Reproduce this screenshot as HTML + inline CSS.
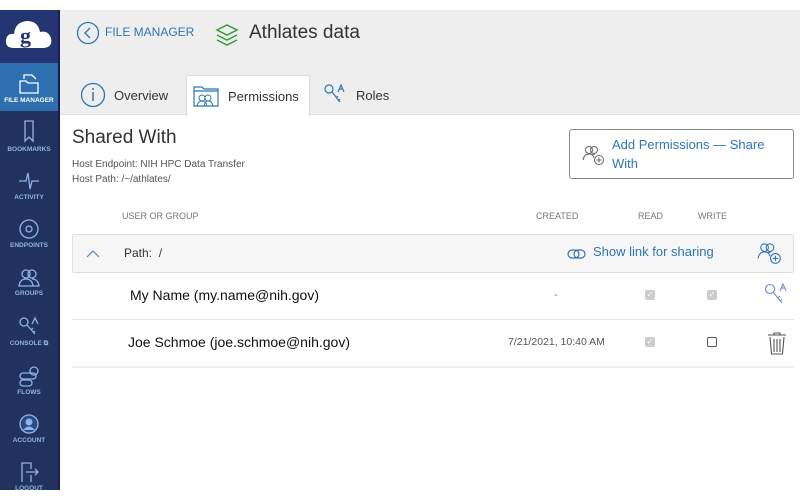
<!DOCTYPE html>
<html><head><meta charset="utf-8"><style>
*{box-sizing:border-box;margin:0;padding:0}
body{width:800px;height:500px;background:#fff;font-family:"Liberation Sans",sans-serif;position:relative;overflow:hidden}
#sb{position:absolute;left:0;top:10px;width:60px;height:480px;background:#22325e;border-right:2px solid #1a1f5a}
#logo{position:absolute;left:0;top:0;width:58px;height:53px;background:#243573}
.it{position:absolute;left:0;width:58px;text-align:center;color:#8fb3e6;font-size:6.5px;font-weight:bold}
.it svg{display:block;margin:0 auto 2px}
#act{background:#2e6fb0;color:#fff}
#hdr{position:absolute;left:60px;top:10px;width:740px;height:105px;background:#eeeeee;border-bottom:1px solid #e2e2e2}
.blue{color:#2f75b5}
.tab{position:absolute;top:65px;height:40px;font-size:13px;color:#333;display:flex;align-items:center}
.m{position:absolute;color:#555}
.hd{position:absolute;top:211px;font-size:9px;color:#777}
.cb{position:absolute;width:10px;height:10px;border-radius:2px;color:#fff;font-size:8px;line-height:10px;text-align:center}
</style></head><body>
<div id="sb">
 <div id="logo"><svg width="58" height="53" viewBox="0 0 58 53"><path d="M14 38 Q5 38 6 30 Q7 23 14 24 Q15 12 27 11 Q38 11 40 22 Q48 20 51 28 Q53 37 44 38 Z" fill="#fff"/><text x="20" y="33" font-size="22" font-family="Liberation Serif" font-weight="bold" fill="#243573">g</text></svg></div>
 <div class="it" id="act" style="top:53px;height:48px;padding-top:10px"><svg width="22" height="22" viewBox="0 0 22 22"><path d="M2 8h6l2 2h10v10H2z M6 6V2h8l4 4" fill="none" stroke="#fff" stroke-width="1.3"/></svg>FILE MANAGER</div>
 <div class="it" style="top:110px"><svg width="14" height="24" viewBox="0 0 14 24"><path d="M3 1h8v20l-4-4-4 4z" fill="none" stroke="#8fb3e6" stroke-width="1.3"/></svg>BOOKMARKS</div>
 <div class="it" style="top:160px"><svg width="22" height="22" viewBox="0 0 22 22"><path d="M1 11h7l2-8 2 16 2-8h7" fill="none" stroke="#8fb3e6" stroke-width="1.3"/></svg>ACTIVITY</div>
 <div class="it" style="top:208px"><svg width="22" height="22" viewBox="0 0 22 22"><circle cx="11" cy="11" r="9" fill="none" stroke="#8fb3e6" stroke-width="1.3"/><circle cx="11" cy="11" r="3" fill="none" stroke="#8fb3e6" stroke-width="1.3"/></svg>ENDPOINTS</div>
 <div class="it" style="top:258px"><svg width="22" height="20" viewBox="0 0 22 20"><circle cx="8" cy="6" r="4" fill="none" stroke="#8fb3e6" stroke-width="1.3"/><circle cx="14" cy="6" r="4" fill="none" stroke="#8fb3e6" stroke-width="1.3"/><path d="M1 18q1-7 7-7t7 7zM10 18h11q-1-7-7-7" fill="none" stroke="#8fb3e6" stroke-width="1.3"/></svg>GROUPS</div>
 <div class="it" style="top:306px"><svg width="22" height="22" viewBox="0 0 22 22"><circle cx="6" cy="6" r="4" fill="none" stroke="#8fb3e6" stroke-width="1.3"/><path d="M9 9l8 9M13 14l2-2M15 17l2-2M14 8l3-6 3 6" fill="none" stroke="#8fb3e6" stroke-width="1.3"/></svg>CONSOLE ⧉</div>
 <div class="it" style="top:355px"><svg width="22" height="22" viewBox="0 0 22 22"><circle cx="16" cy="6" r="4" fill="none" stroke="#8fb3e6" stroke-width="1.3"/><rect x="2" y="8" width="16" height="6" rx="3" fill="none" stroke="#8fb3e6" stroke-width="1.3"/><rect x="2" y="15" width="12" height="6" rx="3" fill="none" stroke="#8fb3e6" stroke-width="1.3"/></svg>FLOWS</div>
 <div class="it" style="top:403px"><svg width="22" height="22" viewBox="0 0 22 22"><circle cx="11" cy="11" r="9" fill="#2a4a84" stroke="#8fb3e6" stroke-width="1.3"/><circle cx="11" cy="9" r="3.5" fill="#8fb3e6"/><path d="M5 17q6-7 12 0" fill="#8fb3e6"/></svg>ACCOUNT</div>
 <div class="it" style="top:451px"><svg width="22" height="22" viewBox="0 0 22 22"><path d="M4 21V2h9v6M13 14v7M8 11h12M17 8l3 3-3 3" fill="none" stroke="#8fb3e6" stroke-width="1.3"/></svg>LOGOUT</div>
</div>
<div id="hdr">
 <svg style="position:absolute;left:16px;top:11px" width="24" height="24" viewBox="0 0 24 24"><circle cx="12" cy="12" r="10.5" fill="none" stroke="#2f75b5" stroke-width="1.3"/><path d="M14 7l-5 5 5 5" fill="none" stroke="#2f75b5" stroke-width="1.3"/></svg>
 <div class="blue" style="position:absolute;left:45px;top:15px;font-size:12px">FILE MANAGER</div>
 <svg style="position:absolute;left:155px;top:14px" width="24" height="26" viewBox="0 0 24 26"><path d="M2 6l10-5 10 5-10 5z M2 11l10 5 10-5 M2 16l10 5 10-5" fill="none" stroke="#3a9a3a" stroke-width="1.5"/></svg>
 <div style="position:absolute;left:189px;top:12px;font-size:19px;color:#333">Athlates data</div>
 <div class="tab" style="left:20px"><svg width="26" height="26" viewBox="0 0 26 26"><circle cx="13" cy="13" r="11.5" fill="none" stroke="#2f75b5" stroke-width="1.3"/><path d="M13 10v9" stroke="#2f75b5" stroke-width="1.5"/><circle cx="13" cy="7" r="1" fill="#2f75b5"/></svg><span style="margin-left:8px">Overview</span></div>
 <div class="tab" style="left:126px;width:124px;top:65px;background:#fff;border:1px solid #ddd;border-bottom:none;border-radius:3px 3px 0 0;padding-left:5px;height:41px"><svg width="28" height="24" viewBox="0 0 28 24"><path d="M2 3h8l2 2h14v17H2z M2 7h24" fill="none" stroke="#2f75b5" stroke-width="1.2"/><circle cx="10" cy="14" r="3" fill="none" stroke="#2f75b5"/><circle cx="16" cy="14" r="3" fill="none" stroke="#2f75b5"/><path d="M5 22q1-5 5-5 4 0 5 5M12 22q1-5 4-5 4 0 5 5" fill="none" stroke="#2f75b5"/></svg><span style="margin-left:8px">Permissions</span></div>
 <div class="tab" style="left:262px"><svg width="26" height="24" viewBox="0 0 26 24"><circle cx="7" cy="6" r="4" fill="none" stroke="#2f75b5" stroke-width="1.2"/><path d="M10 9l8 10M14 15l2-2M16 18l2-2M16 9l3-7 3 7M17 6h4" fill="none" stroke="#2f75b5" stroke-width="1.2"/></svg><span style="margin-left:8px">Roles</span></div>
</div>
<div style="position:absolute;left:72px;top:127px;font-size:19px;color:#333">Shared With</div>
<div class="m" style="left:72px;top:159px;font-size:10px">Host Endpoint: NIH HPC Data Transfer</div>
<div class="m" style="left:72px;top:174px;font-size:10px">Host Path: /~/athlates/</div>
<div style="position:absolute;left:569px;top:129px;width:225px;height:50px;border:1px solid #888;border-radius:3px">
 <svg style="position:absolute;left:12px;top:14px" width="24" height="22" viewBox="0 0 24 22"><circle cx="7" cy="6" r="3.5" fill="none" stroke="#666"/><circle cx="12" cy="6" r="3.5" fill="none" stroke="#666"/><path d="M1 16q1-6 6-6 4 0 5 4M10 11q1-1 3-1" fill="none" stroke="#666"/><circle cx="17" cy="16" r="4.5" fill="#fff" stroke="#666"/><path d="M17 13.5v5M14.5 16h5" stroke="#666"/></svg>
 <div class="blue" style="position:absolute;left:42px;top:5px;font-size:13px;line-height:19px">Add Permissions — Share<br>With</div>
</div>
<div class="hd" style="left:122px">USER OR GROUP</div>
<div class="hd" style="left:536px">CREATED</div>
<div class="hd" style="left:638px">READ</div>
<div class="hd" style="left:698px">WRITE</div>
<div style="position:absolute;left:72px;top:234px;width:722px;height:39px;background:#f6f6f6;border:1px solid #e0e0e0;border-radius:2px">
 <svg style="position:absolute;left:13px;top:15px" width="14" height="8" viewBox="0 0 14 8"><path d="M1 7l6-6 6 6" fill="none" stroke="#5a87c5" stroke-width="1.2"/></svg>
 <div style="position:absolute;left:51px;top:11px;font-size:12px;color:#333">Path:&nbsp; /</div>
 <svg style="position:absolute;left:494px;top:13px" width="20" height="12" viewBox="0 0 20 12"><rect x="1" y="2" width="11" height="8" rx="4" fill="none" stroke="#2f75b5" stroke-width="1.2"/><rect x="7" y="2" width="11" height="8" rx="4" fill="none" stroke="#2f75b5" stroke-width="1.2"/></svg>
 <div class="blue" style="position:absolute;left:520px;top:9px;font-size:13px">Show link for sharing</div>
 <svg style="position:absolute;left:684px;top:6px" width="26" height="24" viewBox="0 0 24 22"><circle cx="7" cy="6" r="3.5" fill="none" stroke="#2f75b5"/><circle cx="12" cy="6" r="3.5" fill="none" stroke="#2f75b5"/><path d="M1 16q1-6 6-6 4 0 5 4M10 11q1-1 3-1" fill="none" stroke="#2f75b5"/><circle cx="17" cy="16" r="4.5" fill="#f6f6f6" stroke="#2f75b5"/><path d="M17 13.5v5M14.5 16h5" stroke="#2f75b5"/></svg>
</div>
<div style="position:absolute;left:130px;top:287px;font-size:14px;color:#111">My Name (my.name@nih.gov)</div>
<div style="position:absolute;left:554px;top:289px;font-size:11px;color:#777">-</div>
<div class="cb" style="left:645px;top:290px;background:#ccc">✓</div>
<div class="cb" style="left:707px;top:290px;background:#ccc">✓</div>
<svg style="position:absolute;left:763px;top:282px" width="26" height="26" viewBox="0 0 26 26"><circle cx="7" cy="7" r="4.5" fill="none" stroke="#6b8bd0" stroke-width="1.1"/><path d="M10 10l9 11M15 16l2-2M17 19l2-2M17 9l3-7 3 7M18 6h4" fill="none" stroke="#6b8bd0" stroke-width="1.1"/></svg>
<div style="position:absolute;left:72px;top:319px;width:722px;height:1px;background:#e6e6e6"></div>
<div style="position:absolute;left:128px;top:334px;font-size:14px;color:#111">Joe Schmoe (joe.schmoe@nih.gov)</div>
<div style="position:absolute;left:508px;top:336px;font-size:10.5px;color:#555">7/21/2021, 10:40 AM</div>
<div class="cb" style="left:645px;top:337px;background:#ccc">✓</div>
<div class="cb" style="left:707px;top:337px;border:1px solid #555;background:#fff"></div>
<svg style="position:absolute;left:766px;top:331px" width="22" height="25" viewBox="0 0 22 25"><path d="M2 4h18M8 4V2h6v2M4 6l1.5 17h11L18 6M8 8v13M11 8v13M14 8v13" fill="none" stroke="#555" stroke-width="1.1"/></svg>
<div style="position:absolute;left:72px;top:366px;width:722px;height:2px;background:#eee"></div>
</body></html>
